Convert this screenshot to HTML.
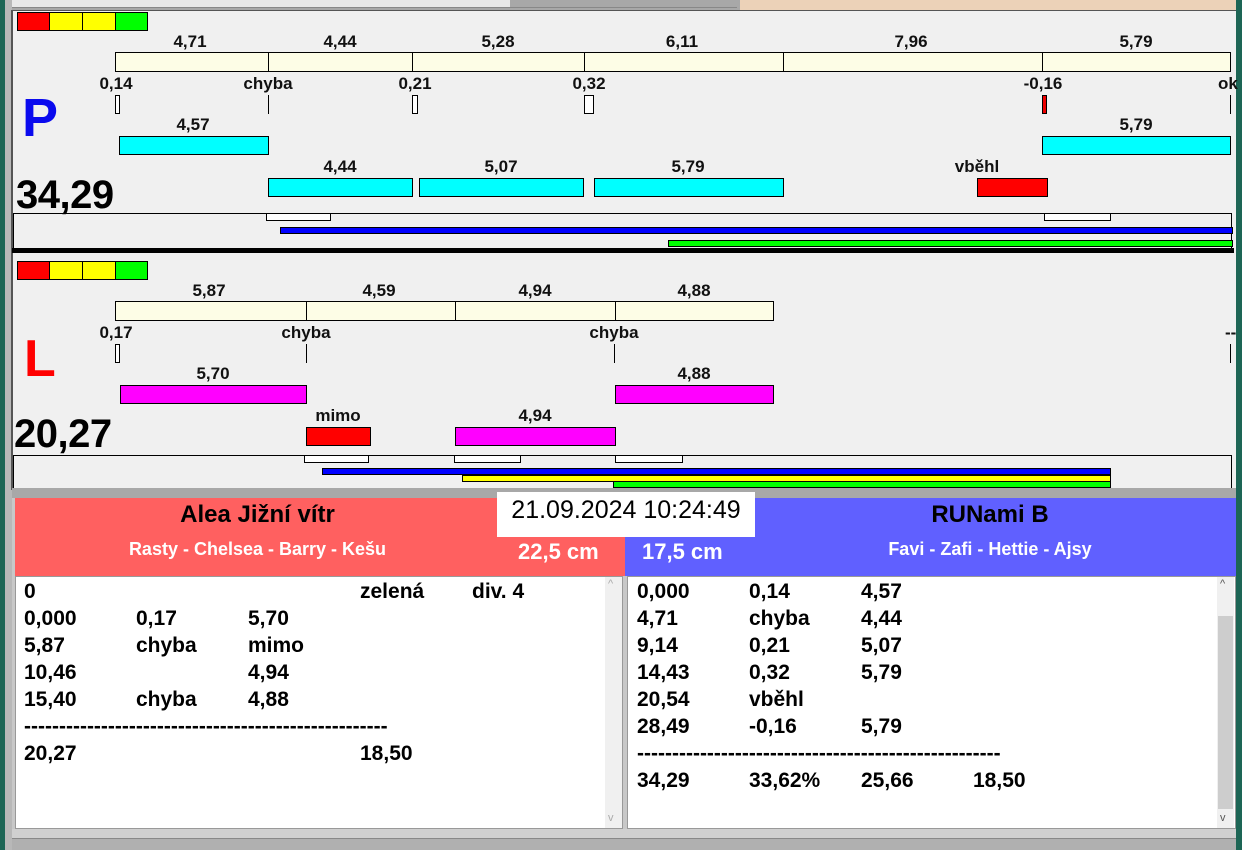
<!DOCTYPE html>
<html><head><meta charset="utf-8">
<style>
*{margin:0;padding:0;box-sizing:border-box}
body{width:1242px;height:850px;overflow:hidden;background:#c8c8c8;font-family:"Liberation Sans",Arial,sans-serif;position:relative}
div{position:absolute}
.b{border:1px solid #000}
.lbl{font-weight:bold;font-size:17px;color:#111;text-align:center;width:100px;margin-left:-50px;line-height:18px;margin-top:2px}
.tk{width:0;border-left:1px solid #000}
.li{font-weight:bold;font-size:21px;color:#000;line-height:27px;white-space:pre}
</style></head><body>
<!-- top strip -->
<div style="left:0;top:0;width:1242px;height:12px;background:#a8a8a8"></div>
<div style="left:12px;top:0;width:498px;height:8px;background:#e8e8e8;border-bottom:1px solid #888"></div>
<div style="left:510px;top:0;width:227px;height:8px;background:#a8a8a8;border-bottom:1px solid #888"></div>
<div style="left:740px;top:0;width:496px;height:12px;background:#ecd2b8"></div>
<div style="left:0;top:0;width:5px;height:850px;background:#1d6555"></div>
<div style="left:5px;top:0;width:7px;height:850px;background:#b8b8b8"></div>
<div style="left:1236px;top:0;width:6px;height:850px;background:#1d6555"></div>
<!-- canvas -->
<div style="left:11px;top:10px;width:1225px;height:480px;background:#f0f0f0;border-left:2px solid #555;border-top:1px solid #555"></div>

<!-- P panel -->
<div class="b" style="left:17px;top:12px;width:33px;height:19px;background:#f00"></div>
<div class="b" style="left:49px;top:12px;width:34px;height:19px;background:#ff0"></div>
<div class="b" style="left:82px;top:12px;width:34px;height:19px;background:#ff0"></div>
<div class="b" style="left:115px;top:12px;width:33px;height:19px;background:#0f0"></div>

<div class="lbl" style="left:190px;top:31px">4,71</div>
<div class="lbl" style="left:340px;top:31px">4,44</div>
<div class="lbl" style="left:498px;top:31px">5,28</div>
<div class="lbl" style="left:682px;top:31px">6,11</div>
<div class="lbl" style="left:911px;top:31px">7,96</div>
<div class="lbl" style="left:1136px;top:31px">5,79</div>
<div class="b" style="left:115px;top:52px;width:154px;height:20px;background:#fdfde6"></div>
<div class="b" style="left:268px;top:52px;width:145px;height:20px;background:#fdfde6"></div>
<div class="b" style="left:412px;top:52px;width:173px;height:20px;background:#fdfde6"></div>
<div class="b" style="left:584px;top:52px;width:200px;height:20px;background:#fdfde6"></div>
<div class="b" style="left:783px;top:52px;width:260px;height:20px;background:#fdfde6"></div>
<div class="b" style="left:1042px;top:52px;width:189px;height:20px;background:#fdfde6"></div>

<div class="lbl" style="left:116px;top:73px">0,14</div>
<div class="lbl" style="left:268px;top:73px">chyba</div>
<div class="lbl" style="left:415px;top:73px">0,21</div>
<div class="lbl" style="left:589px;top:73px">0,32</div>
<div class="lbl" style="left:1043px;top:73px">-0,16</div>
<div class="lbl" style="left:1268px;top:73px;text-align:left">ok</div>
<div class="b" style="left:115px;top:95px;width:5px;height:19px;background:#fff"></div>
<div class="tk" style="left:268px;top:95px;height:19px"></div>
<div class="b" style="left:412px;top:95px;width:6px;height:19px;background:#fff"></div>
<div class="b" style="left:584px;top:95px;width:10px;height:19px;background:#fff"></div>
<div class="b" style="left:1042px;top:95px;width:5px;height:19px;background:#e00"></div>
<div class="tk" style="left:1230px;top:95px;height:19px"></div>

<div style="left:22px;top:88px;font-size:54px;font-weight:bold;color:#0a0aee;line-height:60px">P</div>
<div class="lbl" style="left:193px;top:114px">4,57</div>
<div class="lbl" style="left:1136px;top:114px">5,79</div>
<div class="b" style="left:119px;top:136px;width:150px;height:19px;background:#0ff"></div>
<div class="b" style="left:1042px;top:136px;width:189px;height:19px;background:#0ff"></div>
<div class="lbl" style="left:340px;top:156px">4,44</div>
<div class="lbl" style="left:501px;top:156px">5,07</div>
<div class="lbl" style="left:688px;top:156px">5,79</div>
<div class="lbl" style="left:977px;top:156px">vběhl</div>
<div class="b" style="left:268px;top:178px;width:145px;height:19px;background:#0ff"></div>
<div class="b" style="left:419px;top:178px;width:165px;height:19px;background:#0ff"></div>
<div class="b" style="left:594px;top:178px;width:190px;height:19px;background:#0ff"></div>
<div class="b" style="left:977px;top:178px;width:71px;height:19px;background:#f00"></div>
<div style="left:16px;top:172px;font-size:40px;font-weight:bold;color:#000;line-height:46px;letter-spacing:-0.5px">34,29</div>

<div style="left:13px;top:213px;width:1219px;height:36px;border:1px solid #000;border-bottom:none"></div>
<div class="b" style="left:266px;top:213px;width:65px;height:8px;background:#fff"></div>
<div class="b" style="left:1044px;top:213px;width:67px;height:8px;background:#fff"></div>
<div class="b" style="left:280px;top:227px;width:953px;height:7px;background:#00f"></div>
<div class="b" style="left:668px;top:240px;width:565px;height:7px;background:#0f0"></div>
<div style="left:12px;top:248px;width:1222px;height:5px;background:#000"></div>

<!-- L panel -->
<div class="b" style="left:17px;top:261px;width:33px;height:19px;background:#f00"></div>
<div class="b" style="left:49px;top:261px;width:34px;height:19px;background:#ff0"></div>
<div class="b" style="left:82px;top:261px;width:34px;height:19px;background:#ff0"></div>
<div class="b" style="left:115px;top:261px;width:33px;height:19px;background:#0f0"></div>

<div class="lbl" style="left:209px;top:280px">5,87</div>
<div class="lbl" style="left:379px;top:280px">4,59</div>
<div class="lbl" style="left:535px;top:280px">4,94</div>
<div class="lbl" style="left:694px;top:280px">4,88</div>
<div class="b" style="left:115px;top:301px;width:192px;height:20px;background:#fdfde6"></div>
<div class="b" style="left:306px;top:301px;width:150px;height:20px;background:#fdfde6"></div>
<div class="b" style="left:455px;top:301px;width:161px;height:20px;background:#fdfde6"></div>
<div class="b" style="left:615px;top:301px;width:159px;height:20px;background:#fdfde6"></div>
<div class="lbl" style="left:116px;top:322px">0,17</div>
<div class="lbl" style="left:306px;top:322px">chyba</div>
<div class="lbl" style="left:614px;top:322px">chyba</div>
<div class="lbl" style="left:1275px;top:322px;text-align:left">--</div>
<div class="b" style="left:115px;top:344px;width:5px;height:19px;background:#fff"></div>
<div class="tk" style="left:306px;top:344px;height:19px"></div>
<div class="tk" style="left:614px;top:344px;height:19px"></div>
<div class="tk" style="left:1230px;top:344px;height:19px"></div>
<div style="left:24px;top:330px;font-size:52px;font-weight:bold;color:#f00;line-height:58px">L</div>
<div class="lbl" style="left:213px;top:363px">5,70</div>
<div class="lbl" style="left:694px;top:363px">4,88</div>
<div class="b" style="left:120px;top:385px;width:187px;height:19px;background:#f0f"></div>
<div class="b" style="left:615px;top:385px;width:159px;height:19px;background:#f0f"></div>
<div class="lbl" style="left:338px;top:405px">mimo</div>
<div class="lbl" style="left:535px;top:405px">4,94</div>
<div class="b" style="left:306px;top:427px;width:65px;height:19px;background:#f00"></div>
<div class="b" style="left:455px;top:427px;width:161px;height:19px;background:#f0f"></div>
<div style="left:14px;top:411px;font-size:40px;font-weight:bold;color:#000;line-height:46px;letter-spacing:-0.5px">20,27</div>

<div style="left:13px;top:455px;width:1219px;height:35px;border:1px solid #000;border-bottom:none"></div>
<div class="b" style="left:304px;top:455px;width:65px;height:8px;background:#fff"></div>
<div class="b" style="left:454px;top:455px;width:67px;height:8px;background:#fff"></div>
<div class="b" style="left:615px;top:455px;width:68px;height:8px;background:#fff"></div>
<div class="b" style="left:322px;top:468px;width:789px;height:7px;background:#00f"></div>
<div class="b" style="left:462px;top:475px;width:649px;height:7px;background:#ff0"></div>
<div class="b" style="left:613px;top:481px;width:498px;height:7px;background:#0f0"></div>

<!-- separator -->
<div style="left:12px;top:488px;width:1224px;height:10px;background:#a8a8a8"></div>

<!-- team panels -->
<div style="left:15px;top:498px;width:610px;height:78px;background:#ff6060"></div>
<div style="left:625px;top:498px;width:611px;height:78px;background:#6060ff"></div>
<div style="left:15px;top:499px;width:485px;text-align:center;font-size:24px;font-weight:bold;color:#000;line-height:32px">Alea Jižní vítr</div>
<div style="left:15px;top:537px;width:485px;text-align:center;font-size:18px;font-weight:bold;color:#fff;line-height:24px">Rasty - Chelsea - Barry - Kešu</div>
<div style="left:518px;top:538px;font-size:22px;font-weight:bold;color:#fff;line-height:28px">22,5 cm</div>
<div style="left:497px;top:492px;width:258px;height:45px;background:#fff"></div>
<div style="left:497px;top:492px;width:258px;text-align:center;font-size:25px;color:#000;line-height:36px">21.09.2024 10:24:49</div>
<div style="left:642px;top:538px;font-size:22px;font-weight:bold;color:#fff;line-height:28px">17,5 cm</div>
<div style="left:745px;top:499px;width:490px;text-align:center;font-size:24px;font-weight:bold;color:#000;line-height:32px">RUNami B</div>
<div style="left:745px;top:537px;width:490px;text-align:center;font-size:18px;font-weight:bold;color:#fff;line-height:24px">Favi - Zafi - Hettie - Ajsy</div>

<!-- lists -->
<div style="left:15px;top:576px;width:608px;height:253px;background:#fff;border:1px solid #999"></div>
<div style="left:605px;top:577px;width:17px;height:251px;background:#f0f0f0"></div>
<div style="left:608px;top:578px;font-size:11px;color:#aaa">^</div>
<div style="left:608px;top:812px;font-size:11px;color:#aaa">v</div>
<div style="left:627px;top:576px;width:609px;height:253px;background:#fff;border:1px solid #999"></div>
<div style="left:1217px;top:577px;width:17px;height:251px;background:#f0f0f0"></div>
<div style="left:1218px;top:616px;width:15px;height:193px;background:#cdcdcd"></div>
<div style="left:1220px;top:578px;font-size:11px;color:#555">^</div>
<div style="left:1220px;top:812px;font-size:11px;color:#555">v</div>

<div class="li" style="left:24px;top:578px">0</div>
<div class="li" style="left:360px;top:578px">zelená</div>
<div class="li" style="left:472px;top:578px">div. 4</div>
<div class="li" style="left:24px;top:605px">0,000</div><div class="li" style="left:136px;top:605px">0,17</div><div class="li" style="left:248px;top:605px">5,70</div>
<div class="li" style="left:24px;top:632px">5,87</div><div class="li" style="left:136px;top:632px">chyba</div><div class="li" style="left:248px;top:632px">mimo</div>
<div class="li" style="left:24px;top:659px">10,46</div><div class="li" style="left:248px;top:659px">4,94</div>
<div class="li" style="left:24px;top:686px">15,40</div><div class="li" style="left:136px;top:686px">chyba</div><div class="li" style="left:248px;top:686px">4,88</div>
<div class="li" style="left:24px;top:713px">----------------------------------------------------</div>
<div class="li" style="left:24px;top:740px">20,27</div><div class="li" style="left:360px;top:740px">18,50</div>

<div class="li" style="left:637px;top:578px">0,000</div><div class="li" style="left:749px;top:578px">0,14</div><div class="li" style="left:861px;top:578px">4,57</div>
<div class="li" style="left:637px;top:605px">4,71</div><div class="li" style="left:749px;top:605px">chyba</div><div class="li" style="left:861px;top:605px">4,44</div>
<div class="li" style="left:637px;top:632px">9,14</div><div class="li" style="left:749px;top:632px">0,21</div><div class="li" style="left:861px;top:632px">5,07</div>
<div class="li" style="left:637px;top:659px">14,43</div><div class="li" style="left:749px;top:659px">0,32</div><div class="li" style="left:861px;top:659px">5,79</div>
<div class="li" style="left:637px;top:686px">20,54</div><div class="li" style="left:749px;top:686px">vběhl</div>
<div class="li" style="left:637px;top:713px">28,49</div><div class="li" style="left:749px;top:713px">-0,16</div><div class="li" style="left:861px;top:713px">5,79</div>
<div class="li" style="left:637px;top:740px">----------------------------------------------------</div>
<div class="li" style="left:637px;top:767px">34,29</div><div class="li" style="left:749px;top:767px">33,62%</div><div class="li" style="left:861px;top:767px">25,66</div><div class="li" style="left:973px;top:767px">18,50</div>

<!-- bottom -->
<div style="left:12px;top:829px;width:1224px;height:9px;background:#d0d0d0"></div>
<div style="left:12px;top:838px;width:1224px;height:12px;background:#b0b0b0;border-top:1px solid #888"></div>
</body></html>
